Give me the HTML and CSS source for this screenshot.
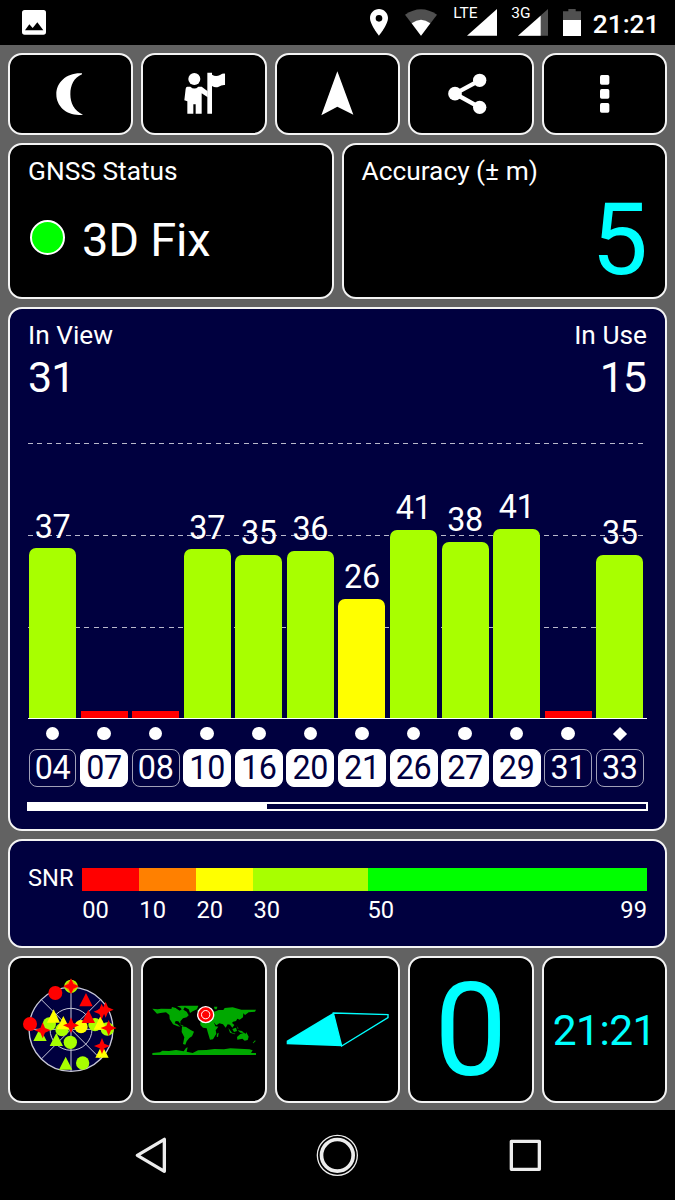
FILE: index.html
```html
<!DOCTYPE html>
<html lang="en">
<head>
    <meta charset="UTF-8">
    <meta name="viewport" content="width=device-width, initial-scale=1.0">
    <title>GNSS Status</title>
    <link rel="stylesheet" href="styles.css">
</head>
<body>
    <header class="status-bar">
        <svg class="picture-icon" viewBox="0 0 72 74"><path fill="#fff" fill-rule="evenodd" d="M8 0H65Q72 0 72 8V66Q72 74 64 74H8Q0 74 0 66V8Q0 0 8 0ZM9 61H64L46 37L32 54L22 43Z"/></svg>
        <div class="status-icons">
            <svg class="pin-icon" viewBox="0 0 54 80"><path fill="#fff" fill-rule="evenodd" d="M27 0C12 0 0 12 0 27C0 47 27 80 27 80S54 47 54 27C54 12 42 0 27 0ZM27 18A10 10 0 1 1 27 38A10 10 0 1 1 27 18Z"/></svg>
            <svg class="wifi-icon" viewBox="0 0 96 80"><path fill="#505050" d="M0 17Q48 -16 96 17L48 80Z"/><path fill="#fff" d="M20 43Q48 22 76 43L48 80Z"/></svg>
            <div class="signal lte"><span>LTE</span><svg viewBox="0 0 90 80"><path fill="#fff" d="M90 0V80H0Z"/></svg></div>
            <div class="signal"><span>3G</span><svg viewBox="0 0 90 80"><path fill="#505050" d="M90 0V80H0Z"/><path fill="#fff" d="M68 20V80H0Z"/></svg></div>
            <svg class="battery-icon" viewBox="0 0 54 81"><path fill="#505050" d="M16 0H38V7H54V40H0V7H16Z"/><path fill="#fff" d="M0 33H54V81H0Z"/></svg>
            <span class="clock">21:21</span>
        </div>
    </header>

    <main class="app">
        <div class="row buttons">
            <button class="card"><svg viewBox="140 209 140 140"><path d="M245 219C200 216 168 245 168 282C168 320 202 349 248 343C221 331 210 308 210 282C210 254 221 232 245 222Z"/></svg></button>
            <button class="card"><svg viewBox="542 211 140 140"><circle cx="582" cy="238" r="18"/><path d="M561 261H570Q582 272 594 261H604L622 275V293L604 281V342H586V314H579V342H561V305L552 302L556 267Q557 261 561 261Z"/><path d="M621 219H635V225Q646 232 659 226Q667 221 674 222V256Q664 255 655 261Q645 265 635 259V342H621Z"/></svg></button>
            <button class="card"><svg viewBox="943 209 140 140"><path d="M1013 213L1061 343L1013 319L965 345Z"/></svg></button>
            <button class="card"><svg viewBox="323 211 140 140"><path d="M418 242L344 282L418 323" fill="none" stroke="#fff" stroke-width="13"/><circle cx="418" cy="242" r="20"/><circle cx="344" cy="282" r="20.500"/><circle cx="418" cy="323" r="20"/></svg></button>
            <button class="card"><svg viewBox="723 211 140 140"><rect x="780" y="226" width="28" height="29" rx="5"/><rect x="780" y="268" width="28" height="29" rx="5"/><rect x="780" y="310" width="28" height="29" rx="5"/></svg></button>
        </div>

        <div class="row summary">
            <section class="card">
                <h2>GNSS Status</h2>
                <div class="fix"><span class="fix-dot"></span>3D Fix</div>
            </section>
            <section class="card">
                <h2>Accuracy (± m)</h2>
                <div class="accuracy">5</div>
            </section>
        </div>

        <section class="card satellites">
            <div class="counts">
                <div><h2>In View</h2><p>31</p></div>
                <div class="in-use"><h2>In Use</h2><p>15</p></div>
            </div>
            <div class="plot">
                <div class="grid-line level-60"></div>
                <div class="grid-line level-40"></div>
                <div class="grid-line level-20"></div>
                <div class="columns bars">
                    <div><span>37</span><i class="bar good" style="height: 169.5px"></i></div>
                    <div><i class="bar none"></i></div>
                    <div><i class="bar none"></i></div>
                    <div><span>37</span><i class="bar good" style="height: 168.5px"></i></div>
                    <div><span>35</span><i class="bar good" style="height: 162.7px"></i></div>
                    <div><span>36</span><i class="bar good" style="height: 166.7px"></i></div>
                    <div><span>26</span><i class="bar fair" style="height: 118.8px"></i></div>
                    <div><span>41</span><i class="bar good" style="height: 188px"></i></div>
                    <div><span>38</span><i class="bar good" style="height: 175.8px"></i></div>
                    <div><span>41</span><i class="bar good" style="height: 189px"></i></div>
                    <div><i class="bar none"></i></div>
                    <div><span>35</span><i class="bar good" style="height: 162.7px"></i></div>
                </div>
            </div>
            <div class="columns marks">
                <i></i><i></i><i></i><i></i><i></i><i></i><i></i><i></i><i></i><i></i><i></i><i class="diamond"></i>
            </div>
            <div class="columns ids">
                <span>04</span>
                <span class="used">07</span>
                <span>08</span>
                <span class="used">10</span>
                <span class="used">16</span>
                <span class="used">20</span>
                <span class="used">21</span>
                <span class="used">26</span>
                <span class="used">27</span>
                <span class="used">29</span>
                <span>31</span>
                <span>33</span>
            </div>
            <div class="scroll"><div class="scroll-thumb"></div></div>
        </section>

        <section class="card snr">
            <span class="snr-title">SNR</span>
            <div class="scale">
                <div class="s00">00</div>
                <div class="s10">10</div>
                <div class="s20">20</div>
                <div class="s30">30</div>
                <div class="s50"><span>50</span><span>99</span></div>
            </div>
        </section>

        <nav class="row pages">
            <div class="card">
                <svg class="sky" viewBox="31 23 300 310">
                    <circle cx="181" cy="177" r="126" fill="#00003f"/>
                    <g fill="none" stroke="#c8c8d8" stroke-width="4">
                        <circle cx="181" cy="177" r="126"/>
                        <circle cx="181" cy="177" r="63" stroke-width="3"/>
                        <path stroke-width="3" d="M181 51V303M55 177H307M92 88L270 266M270 88L92 266"/>
                    </g>
                    <g fill="#a8ff00">
                        <circle cx="181" cy="48" r="20"/>
                        <circle cx="116" cy="161" r="20"/>
                        <circle cx="154" cy="178" r="20"/>
                        <circle cx="179" cy="216" r="20"/>
                        <circle cx="253" cy="163" r="20"/>
                        <circle cx="290" cy="176" r="20"/>
                        <circle cx="216" cy="278" r="20"/>
                        <path d="M88 173L108 212H68ZM137 188L157 227H117ZM165 259L185 298H145Z"/>
                    </g>
                    <g fill="#ff0">
                        <circle cx="211" cy="169" r="20"/>
                        <path d="M129 117L148 157H109ZM158 137L178 177H138ZM269 138L289 178H249ZM274 223L294 262H254Z"/>
                    </g>
                    <path fill="#ff8000" d="M181 27L202 48L181 69L160 48Z"/>
                    <g fill="#f00">
                        <circle cx="134" cy="68" r="21"/>
                        <circle cx="58" cy="161" r="21"/>
                        <path d="M226 68L246 108H206ZM233 118L253 158H213Z"/>
                        <path id="star" d="M181 24L188 41L205 48L188 55L181 72L174 55L157 48L174 41Z"/>
                        <use href="#star" y="117"/>
                        <use href="#star" x="-85" y="132"/>
                        <use href="#star" x="92" y="76"/>
                        <use href="#star" x="104" y="70"/>
                        <use href="#star" x="113" y="125"/>
                        <use href="#star" x="93" y="179"/>
                    </g>
                </svg>
            </div>
            <div class="card">
                <svg class="map" viewBox="32 43 320 150">
                    <g fill="#00a800">
                        <path d="M36 54L52 56L62 54L110 55L118 60L124 56L120 51L110 47L122 45L174 45L170 56L157 62L149 67L145 56L133 50L129 57L139 63L145 74L139 80L128 83L120 92V99L114 92L106 91L103 98L111 101L120 108L112 107L98 101L88 85L87 73L77 65L60 67L50 69Z"/>
                        <path d="M125 107L137 109L151 118L161 123L155 137L147 142L139 152L135 162L128 160L132 140L124 124Z"/>
                        <path d="M181 84L183 75L191 67L203 59L214 58L222 63L235 58L249 58L253 52L277 50L303 57L347 57L344 63L325 65L314 73L309 68L308 80L298 87L291 84L287 91L278 93L275 97L282 103L276 111L269 102L262 101L256 111L248 101L237 98L228 104L214 88L202 86L194 79Z"/>
                        <path d="M184 90L199 87L219 91L225 107L234 108L226 119L228 129L218 146L209 147L202 124L199 113L188 111L180 103V94Z"/>
                        <path d="M290 139L300 130L312 126L315 130L318 125L325 138L322 148L313 150L306 144L291 147Z"/>
                        <path d="M36 187L59 185L66 180L86 181L107 178L130 182L137 172L142 170L139 183L157 187L173 179L198 178L222 175L251 176L270 173L297 174L327 176L337 179L332 187H347V194H36Z"/>
                        <path d="M171 58L179 56V62L172 63ZM176 67L183 70V77L175 76ZM230 129L235 126L233 139L229 138ZM337 157L344 149L346 151L339 158ZM276 115L287 111L290 121L281 124ZM292 119L305 121L311 127L300 126ZM264 112L275 126L285 129L284 131L269 126ZM288 101L291 109L295 113L292 114ZM95 49L109 53L105 58L93 54ZM117 101L130 105L126 107ZM194 54L202 49L205 53L199 57ZM221 48L231 48L229 56L223 56Z"/>
                    </g>
                    <circle cx="196" cy="72" r="24" fill="#f00" stroke="#fff" stroke-width="4"/>
                    <circle cx="196" cy="72" r="12.500" fill="#f00" stroke="#fff" stroke-width="3"/>
                </svg>
            </div>
            <div class="card">
                <svg class="compass" viewBox="42 178 320 120"><path fill="#0ff" d="M50 270L190 186L215 287L50 281Z"/><path fill="none" stroke="#0ff" stroke-width="4" d="M190 187L354 192V201L215 286Z"/></svg>
            </div>
            <div class="card speed">0</div>
            <div class="card time">21:21</div>
        </nav>
    </main>

    <footer class="nav-bar">
        <div><svg viewBox="78 65 140 140"><path d="M190 87V183L109 135Z"/></svg></div>
        <div><svg viewBox="643 65 140 140"><circle cx="713" cy="135" r="60" stroke-width="4"/><circle cx="713" cy="135" r="47.500" stroke-width="11"/></svg></div>
        <div><svg viewBox="1205 65 140 140"><rect x="1233" y="93" width="84" height="84"/></svg></div>
    </footer>
</body>
</html>
```
FILE: styles.css
```css
* {
    box-sizing: border-box;
}
body {
    margin: 0;
    width: 675px;
    height: 1200px;
    display: flex;
    flex-direction: column;
    background-color: #000;
    color: #fff;
    font-family: Roboto, sans-serif;
    overflow: hidden;
}
h2, p {
    margin: 0;
    font-weight: normal;
}
h2 {
    font-size: 26.3px;
    line-height: 30px;
}
svg {
    display: block;
}

/* system bar */
.status-bar {
    flex: none;
    height: 45px;
    padding: 0 15.5px 0 21.7px;
    display: flex;
    justify-content: space-between;
}
.picture-icon {
    width: 24px;
    height: 24.7px;
    margin-top: 10px;
}
.status-icons {
    display: flex;
    align-items: flex-start;
    padding-top: 9px;
}
.pin-icon {
    width: 18px;
    height: 26.7px;
    margin-right: 17px;
}
.wifi-icon {
    width: 32px;
    height: 26.7px;
    margin-right: 16.5px;
}
.signal {
    position: relative;
    width: 37px;
    margin-right: 14.5px;
}
.signal.lte {
    width: 43.5px;
}
.signal span {
    position: absolute;
    left: 0;
    top: -4px;
    font-size: 15.5px;
    line-height: 16px;
}
.signal svg {
    width: 30px;
    height: 26.7px;
    margin-left: auto;
}
.battery-icon {
    width: 18px;
    height: 27px;
    margin-right: 12px;
}
.clock {
    font-size: 26.3px;
    font-weight: 500;
    line-height: 30px;
}

/* app body */
.app {
    flex: none;
    height: 1065px;
    padding: 7.5px 8px;
    background-color: #626262;
    display: grid;
    grid-template-rows: 82px 156.5px 524px 109px 147px;
    gap: 8px;
}
.row {
    display: grid;
    gap: 8px;
}
.buttons, .pages {
    grid-template-columns: repeat(5, 1fr);
}
.summary {
    grid-template-columns: repeat(2, 1fr);
}
.card {
    border: 2px solid #f4f4f4;
    border-radius: 14px;
    background-color: #000;
    color: #fff;
}
.buttons .card {
    padding: 0;
    display: flex;
    align-items: center;
    justify-content: center;
}
.buttons svg {
    width: 46.7px;
    height: 46.7px;
    fill: #fff;
}

.summary .card {
    padding: 11.5px 18px 0;
}
.fix {
    display: flex;
    align-items: center;
    margin-top: 26px;
    font-size: 47px;
    line-height: 56px;
    letter-spacing: -0.2px;
}
.fix-dot {
    width: 35px;
    height: 35px;
    margin: -5px 17px 0 2px;
    border: 2px solid #fff;
    border-radius: 50%;
    background-color: #0f0;
}
.accuracy {
    margin: 4px -1px 0 0;
    text-align: right;
    color: #0ff;
    font-size: 101px;
    line-height: 100px;
}

/* satellite chart */
.satellites, .snr {
    background-color: #00003f;
}
.satellites {
    padding: 10.5px 18px 0;
}
.counts {
    display: flex;
    justify-content: space-between;
}
.counts p {
    margin: 2px 0 1px;
    font-size: 43px;
    line-height: 50px;
    letter-spacing: -1px;
}
.in-use {
    text-align: right;
}
.in-use p {
    margin-right: 1px;
}
.plot {
    position: relative;
    height: 316px;
    border-bottom: 1px solid #fff;
}
.grid-line {
    position: absolute;
    left: 0;
    width: 616px;
    height: 1px;
    background: repeating-linear-gradient(to right, #b9b9cc 0 5px, transparent 5px 9.38px);
}
.level-60 {
    bottom: 273.5px;
}
.level-40 {
    bottom: 182px;
}
.level-20 {
    bottom: 90px;
}
.columns {
    width: 614.3px;
    margin-left: 1px;
    display: grid;
    grid-template-columns: repeat(12, 1fr);
    gap: 4.6px;
}
.bars {
    position: relative;
    height: 100%;
}
.bars > div {
    display: flex;
    flex-direction: column;
    justify-content: flex-end;
}
.bars span {
    margin-bottom: 2.5px;
    text-align: center;
    font-size: 32.3px;
    line-height: 38px;
    letter-spacing: -0.3px;
}
.bar {
    flex: none;
    border-radius: 7px 7px 0 0;
}
.good {
    background-color: #a8ff00;
}
.fair {
    background-color: #ff0;
}
.none {
    height: 6.5px;
    border-radius: 0;
    background-color: #f00;
}
.marks {
    height: 30px;
    align-items: center;
    justify-items: center;
}
.marks i {
    width: 13.5px;
    height: 13.5px;
    border-radius: 50%;
    background-color: #fff;
}
.marks .diamond {
    width: 10px;
    height: 10px;
    border-radius: 0;
    transform: rotate(45deg);
}
.ids span {
    height: 38.5px;
    margin: 0 -0.5px;
    border: 1px solid #a0a0b8;
    border-radius: 8px;
    text-align: center;
    font-size: 32.3px;
    line-height: 37px;
    letter-spacing: -0.3px;
}
.ids .used {
    border-color: #fff;
    background-color: #fff;
    color: #00003f;
}
.scroll {
    height: 9px;
    margin: 15px -1px 0;
    border: 2px solid #fff;
}
.scroll-thumb {
    width: 38.6%;
    height: 100%;
    background-color: #fff;
}

/* signal to noise legend */
.snr {
    display: flex;
    padding: 27px 18px 0;
    font-size: 23.7px;
}
.snr-title {
    width: 54.3px;
    line-height: 20px;
}
.scale {
    flex: 1;
    display: grid;
    grid-template-columns: 10fr 10fr 10fr 20fr 49fr;
}
.scale div {
    border-top: 23px solid;
    padding-top: 5px;
    line-height: 28px;
}
.scale .s00 { border-color: #f00; }
.scale .s10 { border-color: #ff8000; }
.scale .s20 { border-color: #ff0; }
.scale .s30 { border-color: #a8ff00; }
.scale .s50 {
    border-color: #0f0;
    display: flex;
    justify-content: space-between;
}

/* page shortcuts */
.pages .card {
    display: flex;
    align-items: center;
    justify-content: center;
}
.sky {
    width: 100px;
    height: 103.3px;
}
.map {
    width: 106.7px;
    height: 50px;
}
.compass {
    width: 106.7px;
    height: 40px;
}
.pages .speed, .pages .time {
    color: #0ff;
    line-height: 1;
}
.pages .speed {
    padding-top: 2px;
    font-size: 130px;
}
.pages .time {
    padding-top: 3px;
    font-size: 42.5px;
    letter-spacing: -0.5px;
}

/* navigation bar */
.nav-bar {
    flex: 1;
    display: flex;
    padding: 0 56.25px;
}
.nav-bar div {
    flex: 1;
    display: flex;
    align-items: center;
    justify-content: center;
}
.nav-bar svg {
    width: 46.7px;
    height: 46.7px;
    fill: none;
    stroke: #ececec;
    stroke-width: 10;
    stroke-linejoin: round;
}
```
